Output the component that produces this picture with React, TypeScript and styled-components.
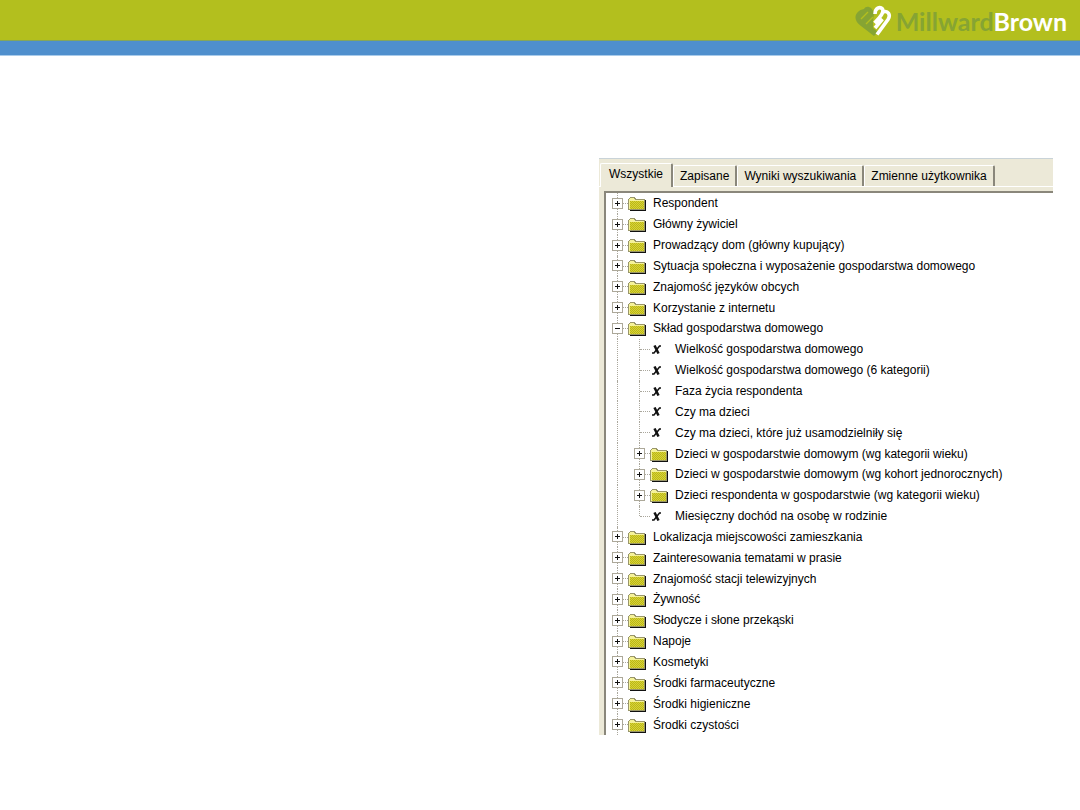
import React, { useState } from "react";
import styled, { createGlobalStyle } from "styled-components";

const GlobalStyle = createGlobalStyle`
  *, *::before, *::after { box-sizing: border-box; }
  body {
    margin: 0;
    background: #fff;
    color: #000;
    font-family: "Liberation Sans", Arial, sans-serif;
    font-size: 12px;
  }
`;

const Banner = styled.header`
  display: flex;
  align-items: center;
  justify-content: flex-end;
  gap: 4px;
  height: 56px;
  padding: 0 13px 15px 0;
  background: linear-gradient(#b3bf1e 40px, #84a65c 40px, #84a65c 41px, #4f8fcd 41px, #4f8fcd 55px, #a9cbea 55px);
`;

const Wordmark = styled.span`
  color: #86a433;
  font-family: Lato, sans-serif;
  font-size: 25px;
  font-weight: 700;
  line-height: 40px;
`;

const WordmarkAccent = styled.span`
  color: #fff;
`;

const Content = styled.main`
  display: flex;
  justify-content: flex-end;
  padding: 102px 27px 76px;
`;

const Panel = styled.section`
  width: 42%;
  min-width: 454px;
  border-top: 1px solid #c9d3d8;
  background: #ece9d8;
`;

const TabBar = styled.div`
  display: flex;
  align-items: flex-end;
  height: 28px;
  padding-left: 1px;
  border-bottom: 1px solid #fff;
`;

const Tab = styled.button<{ $active: boolean }>`
  height: ${(p) => (p.$active ? 24 : 21)}px;
  margin-bottom: ${(p) => (p.$active ? -1 : 0)}px;
  padding: ${(p) => (p.$active ? "0 8px 3px" : "0 6px")};
  border: 0;
  border-top: 1px solid #fff;
  border-left: 1px solid #fff;
  border-right: 2px solid #8a877b;
  border-radius: 2px 2px 0 0;
  background: #ece9d8;
  color: inherit;
  font: inherit;
  white-space: nowrap;
`;

const Tree = styled.ul`
  display: flex;
  flex-direction: column;
  height: 542px;
  margin: 0;
  padding: 0;
  list-style: none;
`;

const TreeFrame = styled.div`
  padding: 4px 0 0 5px;
`;

const TreeWell = styled.div`
  border-top: 2px solid #8a877b;
  border-left: 2px solid #8a877b;
  background: #fff;
`;

const Row = styled.li`
  display: flex;
  flex: 1;
  align-items: stretch;
  min-height: 0;
  max-height: 21px;
`;

const Guide = styled.span<{ $shape: "line" | "last" }>`
  position: relative;
  display: flex;
  align-items: center;
  justify-content: center;
  width: 22px;
  &::before {
    content: "";
    position: absolute;
    top: 0;
    bottom: ${(p) => (p.$shape === "last" ? "50%" : "0")};
    left: 11px;
    border-left: 1px dotted #aaa79c;
  }
`;

const Branch = styled(Guide)`
  &::after {
    content: "";
    position: absolute;
    top: 10px;
    left: 12px;
    right: 0;
    border-top: 1px dotted #aaa79c;
  }
`;

const Toggle = styled.button`
  position: relative;
  z-index: 1;
  display: flex;
  width: 11px;
  height: 11px;
  padding: 0;
  border: 1px solid #aca899;
  background: #fff;
`;

const Glyph = styled.span`
  display: flex;
  align-items: center;
  width: 25px;
`;

const Label = styled.span`
  align-self: center;
  line-height: 20px;
  white-space: nowrap;
`;

const LogoMark = () => (
  <svg width="37" height="32" viewBox="0 0 37 32" fill="none" aria-hidden="true">
    <path
      fill="#86a433"
      d="M19 8C17 1 11 0 9 4C3 5 -1 10 1 15C2 18 4 19 6 21L19 31L23 27L18 23L18 17Z"
    />
    <path stroke="#b3bf1e" strokeWidth="1.4" d="M6 14L13 7M11 19L18 12" />
    <path
      stroke="#fff"
      strokeWidth="3.6"
      d="M20 9C20 3 25 1 27.500 4C29 7 27 10 19.500 18M28 7C33 5 36 10 33 14.500L22 29.500M27.500 14L20 23"
    />
  </svg>
);

const Folder = () => (
  <svg width="18" height="16" viewBox="0 0 18 16" shapeRendering="crispEdges" aria-hidden="true">
    <defs>
      <pattern id="weave" width="2" height="2" patternUnits="userSpaceOnUse">
        <path d="M0 0h2v2H0z" fill="#d6d23c" />
        <path d="M0 0h1v1H0zM1 1h1v1H1z" fill="#bcb814" />
      </pattern>
    </defs>
    <path d="M2 16h16V5h-1v10H2z" fill="#111" />
    <path d="M0 4h1V3h1V2h5v1h1v1h9v11H0z" fill="#99966a" />
    <path d="M1 5V4h1V3h4v1h1v1h9v9H1z" fill="#f5f29a" />
    <path d="M2 6h14v8H2z" fill="url(#weave)" />
  </svg>
);

const Cross = () => (
  <svg width="12" height="9" viewBox="0 0 12 9" fill="none" stroke="#111" aria-hidden="true">
    <path d="M4.500 0.500l4 8" strokeWidth="2.500" />
    <path d="M11 1H9.500L4 8H2" strokeWidth="1.500" />
  </svg>
);

const Sign = ({ open }: { open: boolean }) => (
  <svg width="9" height="9" viewBox="0 0 9 9" stroke="#111" aria-hidden="true">
    <path d={open ? "M2 4.5h5" : "M2 4.5h5M4.5 2v5"} />
  </svg>
);

type Item = { label: string; leaf?: boolean; children?: Item[] };

const items: Item[] = [
  { label: "Respondent" },
  { label: "Główny żywiciel" },
  { label: "Prowadzący dom (główny kupujący)" },
  { label: "Sytuacja społeczna i wyposażenie gospodarstwa domowego" },
  { label: "Znajomość języków obcych" },
  { label: "Korzystanie z internetu" },
  {
    label: "Skład gospodarstwa domowego",
    children: [
      { label: "Wielkość gospodarstwa domowego", leaf: true },
      { label: "Wielkość gospodarstwa domowego (6 kategorii)", leaf: true },
      { label: "Faza życia respondenta", leaf: true },
      { label: "Czy ma dzieci", leaf: true },
      { label: "Czy ma dzieci, które już usamodzielniły się", leaf: true },
      { label: "Dzieci w gospodarstwie domowym (wg kategorii wieku)" },
      { label: "Dzieci w gospodarstwie domowym (wg kohort jednorocznych)" },
      { label: "Dzieci respondenta w gospodarstwie (wg kategorii wieku)" },
      { label: "Miesięczny dochód na osobę w rodzinie", leaf: true },
    ],
  },
  { label: "Lokalizacja miejscowości zamieszkania" },
  { label: "Zainteresowania tematami w prasie" },
  { label: "Znajomość stacji telewizyjnych" },
  { label: "Żywność" },
  { label: "Słodycze i słone przekąski" },
  { label: "Napoje" },
  { label: "Kosmetyki" },
  { label: "Środki farmaceutyczne" },
  { label: "Środki higieniczne" },
  { label: "Środki czystości" },
];

const tabs = ["Wszystkie", "Zapisane", "Wyniki wyszukiwania", "Zmienne użytkownika"];

export default function App() {
  const [active, setActive] = useState(0);
  const [open, setOpen] = useState<string[]>(["Skład gospodarstwa domowego"]);

  const toggle = (label: string) =>
    setOpen((now) => (now.includes(label) ? now.filter((l) => l !== label) : [...now, label]));

  const renderRow = (item: Item, level: number, last: boolean): React.ReactNode => {
    const expanded = open.includes(item.label);
    return (
      <React.Fragment key={item.label}>
        <Row role="treeitem" aria-level={level} aria-expanded={item.leaf ? undefined : expanded}>
          {level === 2 && <Guide $shape="line" />}
          <Branch $shape={last ? "last" : "line"}>
            {!item.leaf && (
              <Toggle aria-label={item.label} onClick={() => toggle(item.label)}>
                <Sign open={expanded} />
              </Toggle>
            )}
          </Branch>
          <Glyph>{item.leaf ? <Cross /> : <Folder />}</Glyph>
          <Label>{item.label}</Label>
        </Row>
        {expanded && item.children?.map((c, i, all) => renderRow(c, 2, i === all.length - 1))}
      </React.Fragment>
    );
  };

  return (
    <>
      <GlobalStyle />
      <Banner>
        <LogoMark />
        <Wordmark>
          Millward<WordmarkAccent>Brown</WordmarkAccent>
        </Wordmark>
      </Banner>
      <Content>
        <Panel>
          <TabBar role="tablist">
            {tabs.map((tab, i) => (
              <Tab key={tab} role="tab" aria-selected={i === active} $active={i === active} onClick={() => setActive(i)}>
                {tab}
              </Tab>
            ))}
          </TabBar>
          <TreeFrame>
            <TreeWell>
              <Tree role="tree">{items.map((item) => renderRow(item, 1, false))}</Tree>
            </TreeWell>
          </TreeFrame>
        </Panel>
      </Content>
    </>
  );
}
